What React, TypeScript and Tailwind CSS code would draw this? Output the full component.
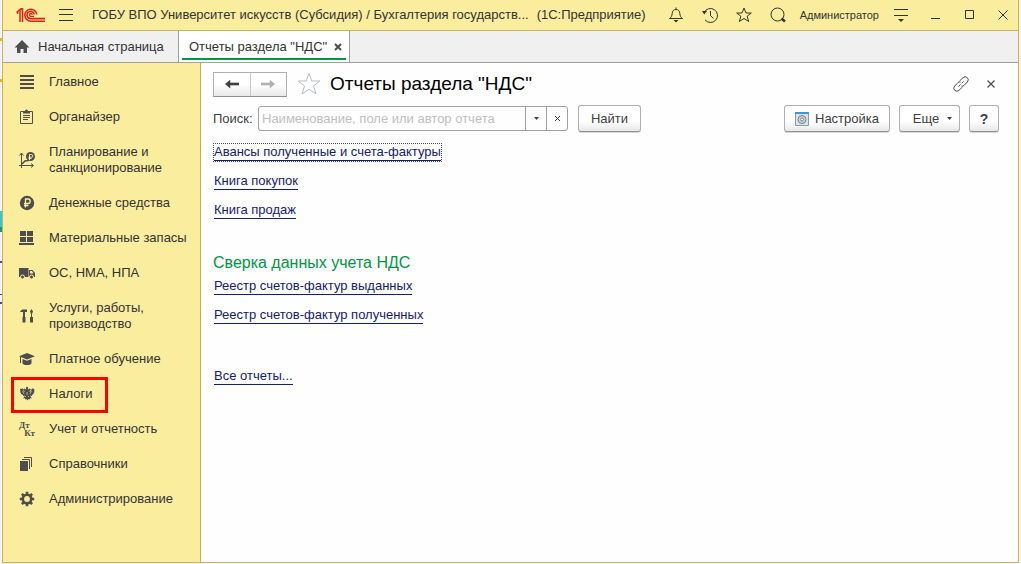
import React, { useState } from "react";

type IconProps = { children: React.ReactNode; className?: string };

const Icon = ({ children, className = "size-4" }: IconProps) => (
  <svg
    className={`shrink-0 ${className}`}
    viewBox="0 0 16 16"
    fill="none"
    stroke="currentColor"
    aria-hidden="true"
  >
    {children}
  </svg>
);

const sections = [
  {
    title: "Главное",
    icon: (
      <Icon>
        <path strokeWidth={2} d="M1 2h14M1 6h14M1 10h14M1 14h14" />
      </Icon>
    ),
  },
  {
    title: "Органайзер",
    icon: (
      <Icon>
        <path d="M4.5 2.5h-3v12h12v-12h-3M4 6.500h7M4 8.500h7M4 10.500h5" />
        <path fill="currentColor" stroke="none" d="M4 4.500V2h2a1.500 1.500 0 0 1 3 0h2v2.500z" />
      </Icon>
    ),
  },
  {
    title: "Планирование и санкционирование",
    icon: (
      <Icon>
        <path d="M2.500 1v15M0 13.500h14M.5 3.500l2-2.500 2 2.500M12 11.500l2.500 2-2.500 2" />
        <path strokeWidth={1.500} d="M3 12l3-3 3-.5 2-2" />
        <circle cx="11.500" cy="4.500" r="4.500" fill="currentColor" stroke="none" />
        <path stroke="#fbed9e" d="M10.500 8V2.500h2a1.300 1.300 0 0 1 0 2.700h-3M9.500 6.500h3" />
      </Icon>
    ),
  },
  {
    title: "Денежные средства",
    icon: (
      <Icon>
        <circle cx="8" cy="8" r="7.200" fill="currentColor" stroke="none" />
        <path
          stroke="#fbed9e"
          strokeWidth={1.300}
          d="M6.500 12.500V4H9a2.200 2.200 0 0 1 0 4.500H5M5 10.500h4.500"
        />
      </Icon>
    ),
  },
  {
    title: "Материальные запасы",
    icon: (
      <Icon>
        <path
          fill="currentColor"
          stroke="none"
          d="M1 1h6v5H1zM8 1h6v5H8zM1 7h6v5H1zM8 7h6v5H8zM0 13h15v2H0z"
        />
      </Icon>
    ),
  },
  {
    title: "ОС, НМА, НПА",
    icon: (
      <Icon>
        <path fill="currentColor" stroke="none" d="M0 3h9.500v9H0zM10 5h3.500L16 8v4h-6z" />
        <path fill="#fbed9e" stroke="none" d="M11 6h2l1.500 2.500H11z" />
        <g fill="currentColor" stroke="#fbed9e">
          <circle cx="3.500" cy="12" r="2" />
          <circle cx="12.500" cy="12" r="2" />
        </g>
      </Icon>
    ),
  },
  {
    title: "Услуги, работы, производство",
    icon: (
      <Icon>
        <path
          fill="currentColor"
          stroke="none"
          d="M1 4c1-2 2-2.500 4-2.500h3V4H6v5h.5v5.500h-3V9H4V4zM12.500 1L14 3.500 13 6v3h1v5.500h-3V9h1V6l-1-2.500z"
        />
      </Icon>
    ),
  },
  {
    title: "Платное обучение",
    icon: (
      <Icon>
        <path
          fill="currentColor"
          stroke="none"
          d="M8 2l8 3.200-8 3.300-8-3.300zM3.500 8L8 9.800 12.500 8v4.500C11 14.500 5 14.500 3.500 12.500zM1 6h1v6H1z"
        />
      </Icon>
    ),
  },
  {
    title: "Налоги",
    marked: true,
    icon: (
      <Icon>
        <path
          fill="currentColor"
          stroke="none"
          d="M8 .5l1 1v2l1.500-1 1.500 1L10.500 5v1L12 5l1-3 1 1 1-.5.5 1.500-.5 1 .5 1-1 1v1l-1.500 1v1l-2-.5 2 3-1.500-.5-1 1.500-1-.5-1 1.500-1-1.500-1 .5-1-1.500-1.500.5 2-3-2 .5v-1L2 8V7L1 6l.5-1L1 4l.5-1.500L2.500 3l1-1 1 3 1 1V5L4 3.500l1.500-1 1.500 1v-2z"
        />
        <path
          stroke="#fbed9e"
          strokeWidth={0.600}
          d="M8 6v3M3.500 5l1.500 3M12.500 5L11 8M6 10l1 1M10 10l-1 1"
        />
      </Icon>
    ),
  },
  {
    title: "Учет и отчетность",
    icon: (
      <span
        aria-hidden="true"
        className="flex w-4 flex-col font-['Liberation_Serif',serif] text-[9px] leading-[8px] font-bold"
      >
        <span>Дт</span>
        <span className="self-end">Кт</span>
      </span>
    ),
  },
  {
    title: "Справочники",
    icon: (
      <Icon>
        <path fill="currentColor" stroke="none" d="M1 5h8v10H1z" />
        <path d="M3 3.500h7.500V13M5 1.500h7.500V11" />
      </Icon>
    ),
  },
  {
    title: "Администрирование",
    icon: (
      <Icon>
        <circle cx="8" cy="8" r="4.200" strokeWidth={2.600} />
        <path
          strokeWidth={2.600}
          d="M8 .8v2.400M8 12.800v2.400M.8 8h2.400M12.800 8h2.400M2.900 2.900l1.700 1.700M11.400 11.400l1.700 1.700M2.900 13.100l1.700-1.700M11.400 4.600l1.700-1.700"
        />
      </Icon>
    ),
  },
];

const Logo = () => (
  <svg
    className="h-[15px] w-[30px] shrink-0"
    viewBox="0 0 30 15"
    fill="none"
    stroke="#d9241c"
    role="img"
    aria-label="1С"
  >
    <path strokeWidth={1.500} d="M.5 4.500L4 1.500v12.500M1 5.500l1.500-1M6.500 0v14M4 1.500L6.500.5" />
    <path strokeWidth={1.600} d="M20.800 6.500A6 6 0 1 0 15 13.200h14M18.200 6.500A3.600 3.600 0 1 0 15 10.600h14" />
    <path strokeWidth={1.300} d="M16.300 6.800a1.400 1.400 0 1 0-1.300 1.500h3" />
  </svg>
);

const HeaderButton = ({ label, children }: { label: string; children: React.ReactNode }) => (
  <button type="button" aria-label={label}>
    <Icon>{children}</Icon>
  </button>
);

const Header = () => (
  <header className="flex h-[31px] shrink-0 items-center border-b border-[#c9b458] bg-[#fbed9e] pr-[7px] pl-[13px]">
    <Logo />
    <button type="button" aria-label="Главное меню" className="ml-3">
      <Icon>
        <path d="M1 2.500h14M1 7.500h14M1 13.500h14" />
      </Icon>
    </button>
    <h1 className="ml-[18px] flex flex-1 gap-2 text-[13px] whitespace-nowrap">
      <span>ГОБУ ВПО Университет искусств (Субсидия) / Бухгалтерия государств...</span>
      <span>(1С:Предприятие)</span>
    </h1>
    <div className="flex gap-[18px]">
      <HeaderButton label="Уведомления">
        <path d="M1.500 11.500c2-1.200 2.500-3 2.700-5C4.400 4 5.500 2.500 8 2.500s3.600 1.500 3.800 4c.2 2 .7 3.800 2.700 5zM8 2.500v-2" />
        <path fill="currentColor" stroke="none" d="M5.500 13h5L8 15.500z" />
      </HeaderButton>
      <HeaderButton label="История">
        <path d="M2.200 5.500A7 7 0 1 1 3 12.800M8.500 4v4.500l3 3" />
        <path fill="currentColor" stroke="none" d="M0 4h5L2.300 7.500z" />
      </HeaderButton>
      <HeaderButton label="Избранное">
        <path d="M8 1l2 5h5.300l-4.200 3.300 1.600 5.200L8 11.500l-4.700 3 1.600-5.200L.7 6H6z" />
      </HeaderButton>
      <HeaderButton label="Поиск">
        <circle cx="7.500" cy="7.500" r="6.500" />
        <path strokeWidth={2.500} d="M11.500 11.500l3.500 3" />
      </HeaderButton>
    </div>
    <button type="button" className="mx-3.5 text-[11px]">
      Администратор
    </button>
    <div className="flex gap-[18px]">
      <HeaderButton label="Настройки окна">
        <path d="M1 2.500h14M1 8.500h14" />
        <path fill="currentColor" stroke="none" d="M5 12h6l-3 3z" />
      </HeaderButton>
      <HeaderButton label="Свернуть">
        <path d="M4 11.500h9" />
      </HeaderButton>
      <HeaderButton label="Развернуть">
        <path d="M4.500 3.500h8v8h-8z" />
      </HeaderButton>
      <HeaderButton label="Закрыть">
        <path d="M3.500 3.500l9 9M12.500 3.500l-9 9" />
      </HeaderButton>
    </div>
  </header>
);

const TabBar = () => (
  <nav className="flex h-8 shrink-0 border-b border-[#a0a0a0] bg-[#f0f0f0]">
    <a href="#home" className="flex w-44 items-center border-r border-[#a0a0a0] pl-[11px]">
      <svg className="size-4" viewBox="0 0 16 16" fill="#4d4d4d" aria-hidden="true">
        <path d="M8 1l7.500 7.500H13V14H9.500v-4h-3v4H3V8.500H.5z" />
      </svg>
      <span className="ml-2">Начальная страница</span>
    </a>
    <div className="flex w-[171px] border-r border-[#a0a0a0] bg-white px-[3px]">
      <div className="mb-0.5 flex flex-1 items-center justify-between border-b-2 border-[#009646] pt-1 pr-1 pl-[7px]">
        <a href="#reports">Отчеты раздела "НДС"</a>
        <button type="button" aria-label="Закрыть вкладку">
          <svg className="size-2" viewBox="0 0 8 8" stroke="#4d4d4d" strokeWidth={2}>
            <path d="M1 1l6 6M7 1L1 7" />
          </svg>
        </button>
      </div>
    </div>
  </nav>
);

const Sidebar = () => (
  <aside className="w-[198px] shrink-0 border-r border-[#c0ac5a] bg-[#fbed9e] pt-px">
    <ul>
      {sections.map((section) => (
        <li key={section.title} className="relative">
          <a
            href="#section"
            className="flex items-center gap-3.5 pt-2.5 pr-2 pb-[9px] pl-4 leading-4 text-[#333]"
          >
            <span className="flex w-4 text-[#4d4d4d]">{section.icon}</span>
            <span className="flex-1">{section.title}</span>
          </a>
          {section.marked && (
            <span className="absolute top-px -bottom-0.5 left-2 w-[97px] border-3 border-[#ff0000]" />
          )}
        </li>
      ))}
    </ul>
  </aside>
);

const buttonClass =
  "flex h-[27px] items-center justify-center rounded-[3px] border border-[#b0b0b0] border-b-[#909090] bg-linear-to-b from-white from-60% to-[#e8e8e8] text-[#404040] shadow-[0_1px_0_#d8d8d8]";

const Caret = () => (
  <svg className="h-[3px] w-[5px]" viewBox="0 0 5 3" fill="#404040" aria-hidden="true">
    <path d="M0 0h5L2.500 3z" />
  </svg>
);

const Toolbar = () => {
  const [query, setQuery] = useState("");

  return (
    <div className="mt-2 flex items-center">
      <label htmlFor="query" className="w-[45px] text-[#404040]">
        Поиск:
      </label>
      <div className="flex h-[25px] w-[310px] rounded-[3px] border border-[#a0a0a0]">
        <input
          id="query"
          value={query}
          onChange={(e) => setQuery(e.target.value)}
          placeholder="Наименование, поле или автор отчета"
          className="min-w-0 flex-1 px-[3px] outline-none placeholder:text-[#c0c0c0]"
        />
        <button
          type="button"
          aria-label="Выбрать"
          className="flex w-[21px] items-center justify-center border-l border-[#a0a0a0]"
        >
          <Caret />
        </button>
        <button
          type="button"
          aria-label="Очистить"
          onClick={() => setQuery("")}
          className="flex w-[21px] items-center justify-center border-l border-[#a0a0a0]"
        >
          <svg className="size-[5px]" viewBox="0 0 5 5" stroke="#404040">
            <path d="M0 0l5 5M5 0L0 5" />
          </svg>
        </button>
      </div>
      <button type="button" className={`${buttonClass} ml-2.5 w-[63px]`}>
        Найти
      </button>
      <button type="button" className={`${buttonClass} ml-auto w-[106px] gap-1.5`}>
        <svg className="size-3.5" viewBox="0 0 14 14" aria-hidden="true">
          <path fill="#dfe3e6" stroke="#8a9cab" d="M.5.5h13v13H.5z" />
          <path fill="#3f95d8" d="M0 0h14v2H0z" />
          <circle cx="7" cy="7.500" r="4" fill="#cfd4d8" stroke="#75818b" />
          <circle cx="7" cy="7.500" r="1.500" fill="#fff" stroke="#75818b" />
        </svg>
        Настройка
      </button>
      <button type="button" className={`${buttonClass} ml-[9px] w-[61px] gap-2 pl-1.5`}>
        Еще
        <Caret />
      </button>
      <button type="button" className={`${buttonClass} ml-[9px] w-[30px] text-sm font-bold`}>
        ?
      </button>
    </div>
  );
};

const ReportLink = ({ children, focused = false }: { children: string; focused?: boolean }) => (
  <li className={`flex border border-dotted ${focused ? "border-[#555]" : "border-transparent"}`}>
    <a href="#report" className="border-b border-[#14216f] leading-4 text-[#14216f]">
      {children}
    </a>
  </li>
);

const Reports = () => (
  <section className="mt-[11px] flex flex-col items-start">
    <ul className="flex flex-col items-start gap-2.5">
      <ReportLink focused>Авансы полученные и счета-фактуры</ReportLink>
      <ReportLink>Книга покупок</ReportLink>
      <ReportLink>Книга продаж</ReportLink>
    </ul>
    <h3 className="mt-[31px] mb-0.5 text-base leading-6 text-[#009646]">Сверка данных учета НДС</h3>
    <ul className="flex flex-col items-start gap-2.5">
      <ReportLink>Реестр счетов-фактур выданных</ReportLink>
      <ReportLink>Реестр счетов-фактур полученных</ReportLink>
    </ul>
    <ul className="mt-[42px]">
      <ReportLink>Все отчеты...</ReportLink>
    </ul>
  </section>
);

// strip of the desktop that shows to the left of the window
const DesktopEdge = () => (
  <div className="flex w-0.5 shrink-0 flex-col">
    <span className="mt-[38px] h-[3px] bg-[#e8b90c]" />
    <span className="mt-[38px] h-[3px] bg-[#e8b90c]" />
    <span className="mt-[129px] h-4 bg-[#35c4dc]" />
    <span className="h-[5px] bg-[#159a70]" />
    <span className="mt-[29px] h-0.5 bg-[#47478f]" />
    <span className="mt-[31px] h-px bg-[#47478f]" />
    <span className="mt-[7px] h-0.5 bg-[#47478f]" />
  </div>
);

const App = () => (
  <div className="flex h-screen bg-[#f4f4f4] pr-0.5 pb-px font-['Liberation_Sans',Arial,sans-serif] text-[13px] text-[#333]">
    <DesktopEdge />
    <div className="flex min-w-0 flex-1 flex-col border-x border-b border-[#c9b458] bg-white">
      <Header />
      <TabBar />
      <div className="flex min-h-0 flex-1">
        <Sidebar />
        <main className="min-w-0 flex-1 bg-[#fefefe] pt-2 pr-[19px] pl-3">
          <div className="flex h-[26px] items-center">
            <div className="flex h-[25px] w-[74px] border border-[#b0b0b0] border-b-[#909090] bg-linear-to-b from-white from-50% to-[#e8e8e8]">
              <button
                type="button"
                aria-label="Назад"
                className="flex flex-1 items-center justify-center border-r border-[#c8c8c8] text-[#404040]"
              >
                <Icon className="size-3.5">
                  <path strokeWidth={3} d="M3 8h13" />
                  <path fill="currentColor" stroke="none" d="M0 8l6-5v10z" />
                </Icon>
              </button>
              <button
                type="button"
                aria-label="Вперед"
                className="flex flex-1 items-center justify-center text-[#b0b0b0]"
              >
                <Icon className="size-3.5">
                  <path strokeWidth={3} d="M0 8h13" />
                  <path fill="currentColor" stroke="none" d="M16 8l-6-5v10z" />
                </Icon>
              </button>
            </div>
            <button type="button" aria-label="В избранное" className="ml-2.5 text-[#b8bcc0]">
              <svg className="size-6" viewBox="0 0 24 24" fill="none" stroke="currentColor">
                <path d="M12 1.500l2.800 7.500h8L16.500 14l2.500 8-7-4.700L5 22l2.500-8L1.200 9h8z" />
              </svg>
            </button>
            <h2 className="ml-[9px] text-[19px] text-black">Отчеты раздела "НДС"</h2>
            <button type="button" aria-label="Получить ссылку" className="ml-auto text-[#4d4d4d]">
              <Icon>
                <path d="M6.500 5L10 1.700a3 3 0 0 1 4.300 4.300L11 9.500c-.7.600-1.600.8-2.500.5M9.500 11L6 14.300A3 3 0 0 1 1.700 10L5 6.500c.7-.6 1.600-.8 2.500-.5M5.500 10.500l2-2M8.800 7.200l1.700-1.700" />
              </Icon>
            </button>
            <button type="button" aria-label="Закрыть" className="mr-1 ml-[18px] text-[#4d4d4d]">
              <svg className="size-2" viewBox="0 0 8 8" stroke="currentColor" strokeWidth={1.200}>
                <path d="M.5.5l7 7M7.500.5l-7 7" />
              </svg>
            </button>
          </div>
          <Toolbar />
          <Reports />
        </main>
      </div>
    </div>
  </div>
);

export default App;
